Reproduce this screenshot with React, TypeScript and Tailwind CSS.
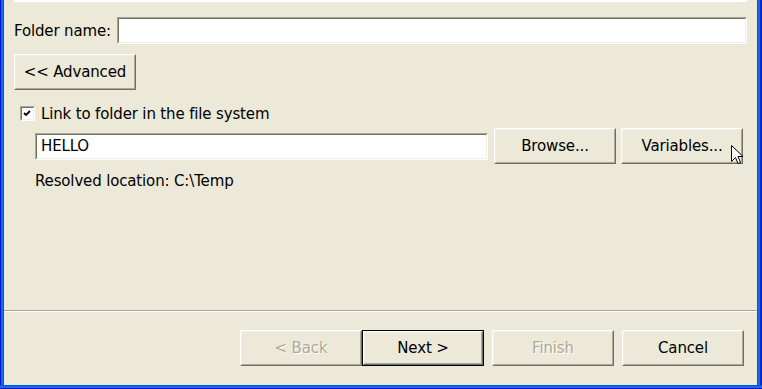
import React from 'react';

const font = { fontFamily: '"DejaVu Sans", Verdana, sans-serif' };

function Field({ value, className = '' }: { value?: string; className?: string }) {
  return (
    <div className={`border border-t-[#aca899] border-l-[#aca899] border-b-white border-r-white ${className}`}>
      <div className="h-full border border-t-[#716f64] border-l-[#716f64] border-b-[#f1efe2] border-r-[#f1efe2] bg-white flex items-center px-[4px] pt-[1px] text-[15px] tracking-[-0.15px] text-black">
        {value}
      </div>
    </div>
  );
}

function Button({ label, disabled, primary, className = '' }: { label: string; disabled?: boolean; primary?: boolean; className?: string }) {
  const inner = (
    <div className="h-full border border-t-white border-l-white border-b-[#716f64] border-r-[#716f64]">
      <div className="h-full border border-t-[#f1efe2] border-l-[#f1efe2] border-b-[#aca899] border-r-[#aca899] bg-[#ece9d8] flex items-center justify-center pt-[1px]">
        <span
          className={`text-[15px] tracking-[-0.15px] ${disabled ? 'text-[#aca899] [text-shadow:1px_1px_0_#ffffff]' : 'text-black'}`}
        >
          {label}
        </span>
      </div>
    </div>
  );
  return (
    <div className={`w-[122px] h-[36px] ${primary ? 'border border-black' : ''} ${className}`}>
      {inner}
    </div>
  );
}

export default function App() {
  return (
    <div className="relative w-[762px] h-[389px] flex flex-col bg-[#0831d9] tracking-[-0.15px]" style={font}>
      <div className="flex flex-1 min-h-0">
        {/* left frame */}
        <div className="w-[4px] flex">
          <div className="w-[1px] bg-[#0019cf]" />
          <div className="w-[2px] bg-[#166aee]" />
          <div className="w-[1px] bg-[#0855dd]" />
        </div>

        {/* dialog body */}
        <div className="flex-1 bg-[#ece9d8] flex flex-col">
          <div className="h-[2px] ml-[10px] mr-[9px] bg-white border-r border-[#f1efe2]" />

          <div className="mt-[15px] flex items-center pl-[10px] pr-[10px] gap-[6px]">
            <span className="text-[15px] text-black whitespace-nowrap pt-[2px]">Folder name:</span>
            <Field className="flex-1 h-[27px]" />
          </div>

          <div className="mt-[10px] pl-[10px]">
            <Button label="<< Advanced" />
          </div>

          <div className="mt-[15px] pl-[16px] flex items-center gap-[6px] h-[16px]">
            <div className="w-[15px] h-[15px] border border-t-[#aca899] border-l-[#aca899] border-b-white border-r-white">
              <div className="h-full border border-t-[#716f64] border-l-[#716f64] border-b-[#f1efe2] border-r-[#f1efe2] bg-white flex items-center justify-center">
                <svg width="9" height="9" viewBox="0 0 9 9">
                  <path d="M1 4 L3 6 L7 2" stroke="#000" strokeWidth="1.8" fill="none" />
                </svg>
              </div>
            </div>
            <span className="text-[15px] text-black pt-[2px]">Link to folder in the file system</span>
          </div>

          <div className="mt-[7px] flex items-center pl-[31px] pr-[14px]">
            <Field value="HELLO" className="flex-1 h-[27px]" />
            <Button label="Browse..." className="ml-[6px]" />
            <Button label="Variables..." className="ml-[5px]" />
          </div>

          <div className="mt-[9px] pl-[31px] text-[15px] leading-[17px] text-black">
            Resolved location: C:\Temp
          </div>

          <div className="flex-1" />

          <div className="h-[1px] bg-[#aca899]" />
          <div className="h-[1px] bg-white" />

          <div className="mt-[18px] mb-[19px] flex justify-end pr-[13px]">
            <Button label="< Back" disabled />
            <Button label="Next >" primary />
            <Button label="Finish" disabled className="ml-[8px]" />
            <Button label="Cancel" className="ml-[8px]" />
          </div>
        </div>

        {/* right frame */}
        <div className="w-[5px] flex">
          <div className="w-[1px] bg-[#0855dd]" />
          <div className="w-[2px] bg-[#166aee]" />
          <div className="w-[1px] bg-[#0831d9]" />
          <div className="w-[1px] bg-[#0019cf]" />
        </div>
      </div>

      {/* bottom frame */}
      <div className="h-[4px] flex flex-col">
        <div className="h-[1px] bg-[#0855dd]" />
        <div className="h-[2px] bg-[#166aee]" />
        <div className="h-[1px] bg-[#0019cf]" />
      </div>

      {/* mouse pointer */}
      <svg className="absolute left-[731px] top-[145px]" width="13" height="21" viewBox="0 0 13 21">
        <path
          d="M0.5 0.5 L0.5 16.5 L4.5 12.5 L7 18.5 L9.5 17.5 L7 11.5 L12 11.5 Z"
          fill="#fff"
          stroke="#000"
          strokeWidth="1"
        />
      </svg>
    </div>
  );
}
